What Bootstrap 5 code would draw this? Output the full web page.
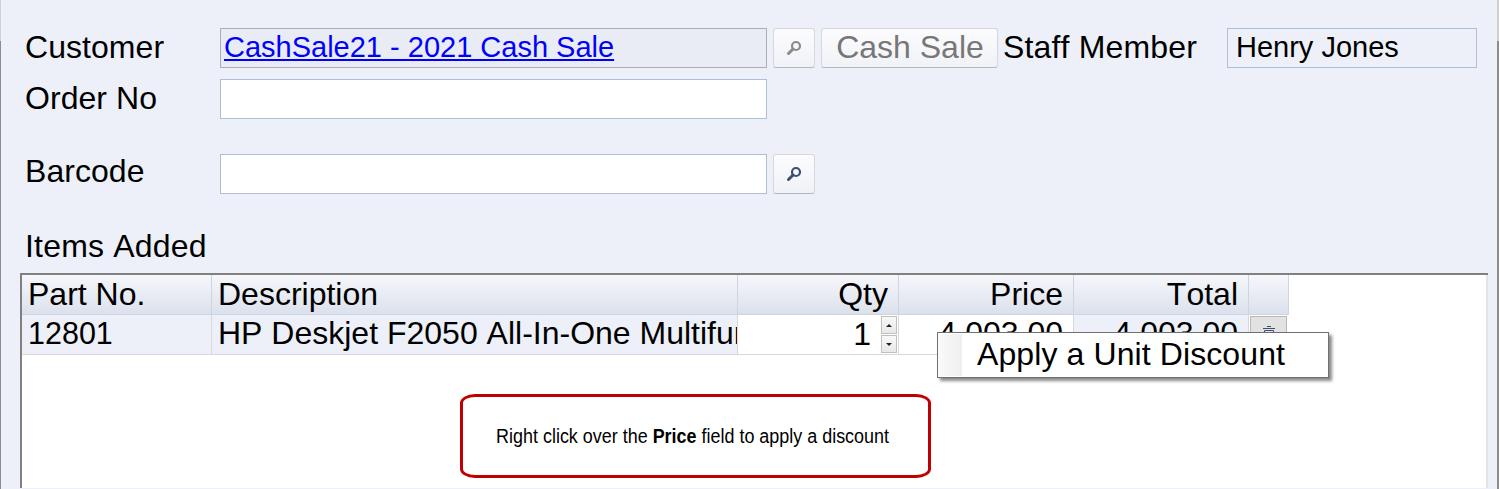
<!DOCTYPE html>
<html lang="en">
<head>
<meta charset="utf-8">
<title>Sale</title>
<link rel="stylesheet" href="https://cdn.jsdelivr.net/npm/bootstrap@5.3.0/dist/css/bootstrap.min.css">
<style>
html,body{height:489px;overflow:hidden;margin:0}
body{background:#edf0f8;font-family:"Liberation Sans",Arial,sans-serif;color:#000;font-kerning:none}
.shell{height:489px;border-style:solid;border-width:0 2px 0 1px;border-image:linear-gradient(#d0d0d0 42px,#8c8c8c 42px) 1;padding:28px 9px 0 19px}
.form-line{height:40px}
.form-line.second{margin-top:11px}
.form-line.third{margin-top:35px}
.lbl{width:200px;padding-left:5px;font-size:32px;line-height:38px;white-space:nowrap;flex:none;letter-spacing:.05px}
.third .lbl{line-height:34px}
.valbox{width:547px;height:40px;border:1px solid #b0bfd8;background:#fff;flex:none;font-size:29px;line-height:36px;padding-left:3px}
.valbox.locked{background:#e9ecf4;border-color:#a9adb5}
.valbox a{color:#00f}
.iconbtn{width:42px;height:40px;margin-left:6px;padding:0;flex:none;border:1px solid #d6d8de;border-bottom-color:#b4b6bc;border-radius:3px;background:linear-gradient(#fcfcfe,#f0f2f7);display:flex;align-items:center;justify-content:center}
.salebtn{width:177px;height:40px;margin-left:6px;padding:0 0 2px 1px;flex:none;font-size:32px;line-height:34px;color:#777;border:1px solid #d6d8de;border-bottom-color:#b4b6bc;border-radius:3px;background:linear-gradient(#fcfcfe,#f0f2f7)}
.stafflbl{font-size:32px;line-height:38px;margin-left:5px;width:224px;flex:none;white-space:nowrap;letter-spacing:.17px}
.staffbox{width:250px;height:40px;border:1px solid #b0bfd8;font-size:29px;line-height:36px;padding-left:8px;flex:none}
.sectionlbl{font-size:32px;line-height:38px;margin-top:33px;padding-left:5px;height:47px;letter-spacing:.2px}
.gridwrap{position:relative;height:215px;background:#fff;border:solid #808080;border-width:2px 0 0 2px;box-shadow:inset -2px 0 0 #e4e4e4;margin-top:-1px}
.itemgrid{border-collapse:separate;border-spacing:0;table-layout:fixed;width:1267px}
.itemgrid th{height:40px;font-weight:400;font-size:32px;line-height:36px;padding:0 10px 2px 6px;background:linear-gradient(#f6f7fb,#dbe1ec);border-right:1px solid #cdd5e2;border-bottom:1px solid #cdd5e2;white-space:nowrap}
.itemgrid td{height:40px;font-size:32px;line-height:36px;padding:0 10px 3px 6px;border-right:1px solid #d8d8d8;border-bottom:1px solid #d8d8d8;white-space:nowrap;overflow:hidden}
.itemgrid td.tint{background:#edf0f8}
.itemgrid td.partno{font-size:30.5px}
.itemgrid .num{text-align:right}
.itemgrid td.qtycell{padding:0}
.qtyinner{display:flex;justify-content:flex-end;align-items:center;gap:10px}
.qtyinner>span:first-child{margin-top:-2px}
.spin{display:flex;flex-direction:column;gap:1px;margin-right:1px}
.spinbtn{width:16px;height:18px;background:linear-gradient(#f8f8f8,#e8e8e8);border:1px solid #c0c0c0;display:flex;align-items:center;justify-content:center}
.tri-up{width:0;height:0;border-left:3px solid transparent;border-right:3px solid transparent;border-bottom:3px solid #222}
.tri-down{width:0;height:0;border-left:3px solid transparent;border-right:3px solid transparent;border-top:3px solid #222}
.itemgrid td.delcell{padding:0;border:0;background:#fff;vertical-align:top}
.delbtn{width:37px;height:36px;margin:1px 0 0 1px;background:#e2e2e2;border:1px solid #b8b8b8;display:flex;justify-content:center;padding-top:8px}
.ctxmenu{position:absolute;left:915px;top:57px;width:392px;height:46px;background:#fff;border:1px solid #707070;box-shadow:3px 3px 3px #8a8a8a;display:flex;z-index:3}
.ctxgutter{width:24px;margin:1px 0;background:linear-gradient(to right,#fafafa,#efefef);flex:none}
.ctxtext{font-size:32px;line-height:42px;padding-left:15px;white-space:nowrap;letter-spacing:.1px}
.callout{position:absolute;left:438px;top:119px;width:471px;height:84px;border:3px solid #c00000;border-radius:15px/9px;background:#fff;display:flex;align-items:center;justify-content:center;color:#000;padding:1px 5px 0 0}
.callout span{font-size:19.5px;transform:scaleX(.92);white-space:nowrap;display:inline-block}
</style>
</head>
<body>
<div class="shell">
  <div class="d-flex form-line">
    <div class="lbl">Customer</div>
    <div class="valbox locked"><a href="#">CashSale21 - 2021 Cash Sale</a></div>
    <button type="button" class="iconbtn" aria-label="Search"><svg width="18" height="18" viewBox="0 0 18 18"><circle cx="11" cy="7" r="4" fill="none" stroke="#8a8a8a" stroke-width="2.2"/><path d="M8 10L3.5 14.5" stroke="#8a8a8a" stroke-width="3" stroke-linecap="round"/></svg></button>
    <button type="button" class="salebtn">Cash Sale</button>
    <div class="stafflbl">Staff Member</div>
    <div class="staffbox">Henry Jones</div>
  </div>
  <div class="d-flex form-line second">
    <div class="lbl">Order No</div>
    <div class="valbox"></div>
  </div>
  <div class="d-flex form-line third">
    <div class="lbl">Barcode</div>
    <div class="valbox"></div>
    <button type="button" class="iconbtn" aria-label="Search"><svg width="18" height="18" viewBox="0 0 18 18"><circle cx="11" cy="7" r="4" fill="none" stroke="#3c4f6e" stroke-width="2.2"/><path d="M8 10L3.5 14.5" stroke="#3c4f6e" stroke-width="3" stroke-linecap="round"/></svg></button>
  </div>
  <div class="sectionlbl">Items Added</div>
  <div class="gridwrap">
    <table class="itemgrid">
      <colgroup><col style="width:190px"><col style="width:526px"><col style="width:161px"><col style="width:175px"><col style="width:175px"><col style="width:40px"></colgroup>
      <thead><tr><th>Part No.</th><th>Description</th><th class="num">Qty</th><th class="num">Price</th><th class="num">Total</th><th></th></tr></thead>
      <tbody><tr>
        <td class="tint partno">12801</td>
        <td class="tint">HP Deskjet F2050 All-In-One Multifunction</td>
        <td class="num qtycell"><div class="qtyinner"><span>1</span><span class="spin"><span class="spinbtn"><span class="tri-up"></span></span><span class="spinbtn"><span class="tri-down"></span></span></span></div></td>
        <td class="num">4,003.00</td>
        <td class="num tint">4,003.00</td>
        <td class="delcell"><div class="delbtn"><svg width="14" height="16" viewBox="0 0 14 16"><path d="M5 1.5h4M1 3.5h12M2.5 5.5h9v10h-9zM5 7v6M7 7v6M9 7v6" fill="none" stroke="#3c4f6e" stroke-width="1"/></svg></div></td>
      </tr></tbody>
    </table>
    <div class="ctxmenu"><div class="ctxgutter"></div><div class="ctxtext">Apply a Unit Discount</div></div>
    <div class="callout"><span>Right click over the <b>Price</b> field to apply a discount</span></div>
  </div>
</div>
<script src="https://cdn.jsdelivr.net/npm/bootstrap@5.3.0/dist/js/bootstrap.bundle.min.js"></script>
</body>
</html>
